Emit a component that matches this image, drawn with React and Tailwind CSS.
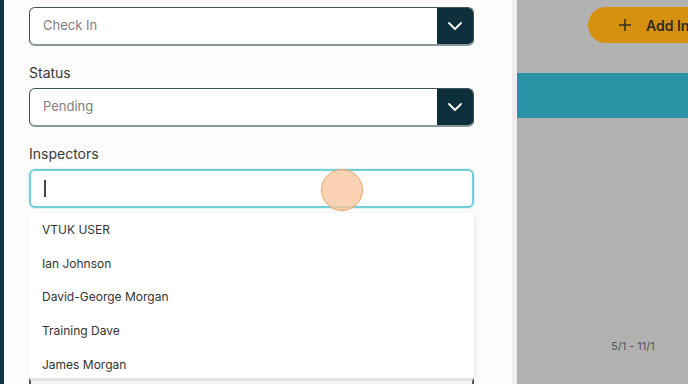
import React from "react";

function Chevron() {
  return (
    <svg width="16" height="10" viewBox="0 0 16 10" fill="none">
      <path d="M2 2 L8 8 L14 2" stroke="#ffffff" strokeWidth="1.8" strokeLinecap="round" strokeLinejoin="round" />
    </svg>
  );
}

function Select({ value }) {
  return (
    <div className="flex h-[39px] shrink-0 w-[445px] rounded-[6px] border border-[#3d5358] border-b-2 border-b-[#8a9999] bg-white overflow-hidden">
      <div className="flex-1 flex items-center pl-[13px] text-[13px] text-[#808080]">{value}</div>
      <div className="w-[36px] bg-[#0d2f3b] flex items-center justify-center">
        <Chevron />
      </div>
    </div>
  );
}

const people = ["VTUK USER", "Ian Johnson", "David-George Morgan", "Training Dave", "James Morgan"];

export default function App() {
  return (
    <div
      className="relative flex w-[688px] h-[384px] overflow-hidden bg-[#b2b2b2]"
      style={{ fontFamily: "Inter, 'Noto Sans', sans-serif" }}
    >
      <div className="w-[4px] shrink-0 bg-[#0f3a45]" />
      <div className="w-[508px] shrink-0 bg-[#fcfcfc] pl-[25px] pt-[7px] flex flex-col">
        <Select value="Check In" />
        <div className="mt-[17px] mb-[5px] h-[20px] shrink-0 leading-[20px] text-[14px] text-[#3a3a3a]">Status</div>
        <Select value="Pending" />
        <div className="mt-[17px] mb-[5px] h-[20px] shrink-0 leading-[20px] text-[14px] text-[#3a3a3a]">Inspectors</div>
        <div className="h-[39px] shrink-0 w-[445px] rounded-[6px] border-2 border-[#74cfdb] shadow-[0_0_2px_rgba(80,190,210,0.5)] bg-white flex items-center pl-[13px]">
          <div className="w-[1.5px] h-[17px] bg-[#444]" />
        </div>
        <div className="mt-[5px] w-[445px] shrink-0 bg-white shadow-[2px_2px_6px_rgba(0,0,0,0.08)] h-[165px] flex flex-col">
          {people.map((p) => (
            <div key={p} className="h-[33.75px] shrink-0 flex items-center pl-[13px] text-[12px] text-[#333333]">
              {p}
            </div>
          ))}
        </div>
        <div className="w-[445px] h-[10px] shrink-0 border-l-2 border-r-2 border-[#555] border-t-[3px] border-t-[#e2e2e2] bg-[#f4f4f4]" />
      </div>
      <div className="w-[5px] shrink-0 bg-[#efefef]" />
      <div className="flex-1 flex flex-col pt-[7px] overflow-hidden">
        <div className="ml-[71px] h-[36px] w-[160px] shrink-0 rounded-full bg-[#d6920f] flex items-center pl-[30px] gap-[14px] text-[#2e2a22]">
          <svg width="14" height="14" viewBox="0 0 14 14">
            <path d="M7 1 V13 M1 7 H13" stroke="#3a3226" strokeWidth="1.6" />
          </svg>
          <span className="text-[14px] font-semibold whitespace-nowrap">Add Inspection</span>
        </div>
        <div className="mt-[30px] h-[45px] shrink-0 bg-[#2a93a6]" />
        <div className="mt-[220px] pl-[94px] h-[16px] leading-[16px] text-[11px] text-[#555555]">5/1 - 11/1</div>
      </div>
      <div className="absolute left-[321px] top-[169px] w-[42px] h-[42px] rounded-full bg-[#f9c8a0]/80 border border-[#f0a56a]" />
    </div>
  );
}
